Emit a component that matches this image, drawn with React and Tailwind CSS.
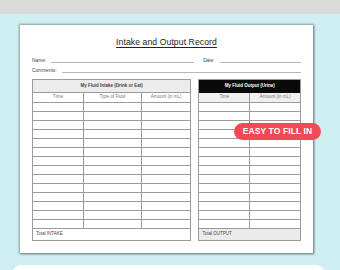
const rows = Array.from({ length: 14 });

function IntakeTable() {
  return (
    <div className="w-[160px] border border-[#9c9c9c] flex flex-col text-[#555]">
      <div className="h-[13px] bg-[#ececec] border-b border-[#9c9c9c] flex items-center justify-center text-[4.5px] font-bold text-[#444]">
        My Fluid Intake (Drink or Eat)
      </div>
      <div className="h-[10px] grid grid-cols-[51px_58px_1fr] border-b border-[#9c9c9c] text-[4.5px] text-[#777]">
        <div className="flex items-center justify-center border-r border-[#9c9c9c]">Time</div>
        <div className="flex items-center justify-center border-r border-[#9c9c9c]">Type of Fluid</div>
        <div className="flex items-center justify-center">Amount (in mL)</div>
      </div>
      {rows.map((_, i) => (
        <div key={i} className="h-[9px] grid grid-cols-[51px_58px_1fr] border-b border-[#9c9c9c]">
          <div className="border-r border-[#9c9c9c]" />
          <div className="border-r border-[#9c9c9c]" />
          <div />
        </div>
      ))}
      <div className="h-[11px] flex items-center pl-[3px] text-[4.5px] text-[#444]">Total INTAKE</div>
    </div>
  );
}

function OutputTable() {
  return (
    <div className="w-[103px] border border-[#9c9c9c] flex flex-col text-[#555]">
      <div className="h-[13px] bg-[#0a0a0a] flex items-center justify-center text-[4.5px] font-bold text-white">
        My Fluid Output (Urine)
      </div>
      <div className="h-[10px] grid grid-cols-[51px_1fr] bg-[#f0f0f0] border-b border-[#9c9c9c] text-[4.5px] text-[#777]">
        <div className="flex items-center justify-center border-r border-[#9c9c9c]">Time</div>
        <div className="flex items-center justify-center">Amount (in mL)</div>
      </div>
      {rows.map((_, i) => (
        <div key={i} className="h-[9px] grid grid-cols-[51px_1fr] border-b border-[#9c9c9c]">
          <div className="border-r border-[#9c9c9c]" />
          <div />
        </div>
      ))}
      <div className="h-[11px] bg-[#ebebeb] flex items-center pl-[3px] text-[4.5px] text-[#444]">Total OUTPUT</div>
    </div>
  );
}

export default function App() {
  return (
    <div
      className="w-[340px] h-[270px] overflow-hidden flex flex-col bg-[#d0eff2]"
      style={{ fontFamily: '"Liberation Sans", Arial, sans-serif' }}
    >
      <div className="h-[14px] bg-[#dadada] shrink-0" />
      <div className="relative flex-1 flex flex-col">
        <div className="ml-[20px] mt-[11px] w-[293px] h-[228px] bg-white shadow-[0_0_2px_1px_rgba(90,110,115,0.6),1px_1px_2px_rgba(60,80,85,0.5)] flex flex-col px-[12px] pt-[12px]">
          <div className="h-[11px] flex items-center justify-center text-[8.6px] text-[#222] underline underline-offset-[1.5px] decoration-[0.7px] tracking-[0.1px]">
            Intake and Output Record
          </div>
          <div className="mt-[8px] h-[8px] flex items-end text-[4.8px] text-[#444]">
            <span className="leading-none">Name:</span>
            <div className="ml-[5px] w-[143px] border-b border-[#b5b5b5] mb-[1px]" />
            <span className="ml-[9px] leading-none">Date:</span>
            <div className="ml-[5px] flex-1 border-b border-[#b5b5b5] mb-[1px]" />
          </div>
          <div className="mt-[2px] h-[8px] flex items-end text-[4.8px] text-[#444]">
            <span className="leading-none">Comments:</span>
            <div className="ml-[5px] flex-1 border-b border-[#b5b5b5] mb-[1px]" />
          </div>
          <div className="mt-[5px] flex gap-[7px]">
            <IntakeTable />
            <OutputTable />
          </div>
        </div>
        <div className="absolute left-[234px] top-[109px] w-[87px] h-[17px] rounded-full bg-[#f04b55] flex items-center justify-center text-white text-[8.5px] font-bold tracking-[0.1px]">
          EASY TO FILL IN
        </div>
        <div className="mt-[12px] ml-[12px] w-[313px] h-[20px] bg-white rounded-t-[9px]" />
      </div>
    </div>
  );
}
